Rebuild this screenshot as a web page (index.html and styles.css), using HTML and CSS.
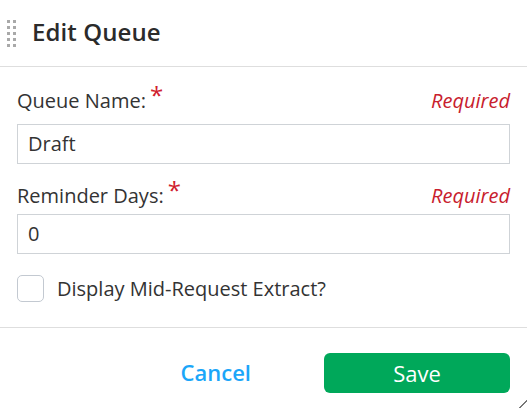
FILE: index.html
```html
<!DOCTYPE html>
<html>
<head>
<meta charset="utf-8">
<link rel="stylesheet" href="styles.css">
</head>
<body>
<div class="dialog">
  <header class="head">
    <span class="grip"><i></i><i></i><i></i><i></i><i></i><i></i><i></i><i></i><i></i><i></i></span>
    <h1 class="title">Edit Queue</h1>
  </header>
  <div class="body">
    <div class="field">
      <div class="label-row">
        <label class="label">Queue Name:<span class="star">*</span></label>
        <span class="req">Required</span>
      </div>
      <div class="input">Draft</div>
    </div>
    <div class="field field-second">
      <div class="label-row">
        <label class="label">Reminder Days:<span class="star">*</span></label>
        <span class="req">Required</span>
      </div>
      <div class="input">0</div>
    </div>
    <div class="check-row">
      <span class="box"></span>
      <span class="check-label">Display Mid-Request Extract?</span>
    </div>
  </div>
  <footer class="foot">
    <button class="cancel">Cancel</button>
    <button class="save">Save</button>
  </footer>
  <span class="resize"></span>
</div>
</body>
</html>
```

FILE: styles.css
```css
* { box-sizing: border-box; }
html, body { margin: 0; padding: 0; background: #fff; }
body {
  font-family: "Open Sans", "Liberation Sans", sans-serif;
  color: #333;
  width: 527px;
  height: 408px;
  overflow: hidden;
}
.dialog { position: relative; width: 527px; height: 408px; }
.head {
  height: 67px;
  display: flex;
  align-items: center;
  padding-left: 7px;
  border-bottom: 1px solid #dedede;
}
.grip {
  display: grid;
  grid-template-columns: 3px 3px;
  column-gap: 3px;
  row-gap: 3px;
  margin-right: 16px;
}
.grip i { display: block; width: 3px; height: 3px; background: #a9a9a9; }
.title {
  margin: 0 0 3px 0;
  font-size: 24px;
  font-weight: 600;
  color: #2b2b2b;
  line-height: 32px;
  letter-spacing: 0.1px;
}
.body { padding: 17px 17px 0 17px; height: 261px; border-bottom: 1px solid #dedede; }
.field { margin-bottom: 10px; }
.label-row {
  display: flex;
  justify-content: space-between;
  align-items: flex-end;
  height: 30px;
  margin-bottom: 10px;
}
.field-second .label-row { height: 35px; margin-bottom: 5px; }
.label { font-size: 20px; color: #333; line-height: 26px; }
.star { color: #d0202d; font-size: 24px; margin-left: 4px; position: relative; top: -4px; line-height: 1; }
.req { color: #c8202d; font-style: italic; font-size: 20px; line-height: 26px; }
.input {
  height: 40px;
  border: 1px solid #cfd3d7;
  padding: 0 10px;
  font-size: 20px;
  line-height: 38px;
  color: #333;
}
.check-row { display: flex; align-items: center; margin-top: 21px; }
.box {
  width: 27px;
  height: 27px;
  border: 1px solid #c3c9d1;
  border-radius: 5px;
  margin-right: 13px;
}
.check-label { font-size: 20px; color: #333; line-height: 27px; }
.foot {
  display: flex;
  justify-content: flex-end;
  align-items: center;
  padding: 25px 17px 0 0;
}
.cancel {
  font-family: inherit;
  background: none;
  border: none;
  color: #1ba6f9;
  font-size: 22px;
  font-weight: 600;
  padding: 0;
  margin-right: 73px;
  margin-top: -3px;
}
.save {
  font-family: inherit;
  width: 186px;
  height: 40px;
  background: #00a85a;
  border: none;
  border-radius: 6px;
  color: #fff;
  font-size: 22px;
  padding: 0;
}
.resize {
  position: absolute;
  right: 0;
  bottom: 0;
  width: 8px;
  height: 8px;
  background: linear-gradient(135deg, transparent 45%, #777 45%, #777 58%, transparent 58%);
}
```
